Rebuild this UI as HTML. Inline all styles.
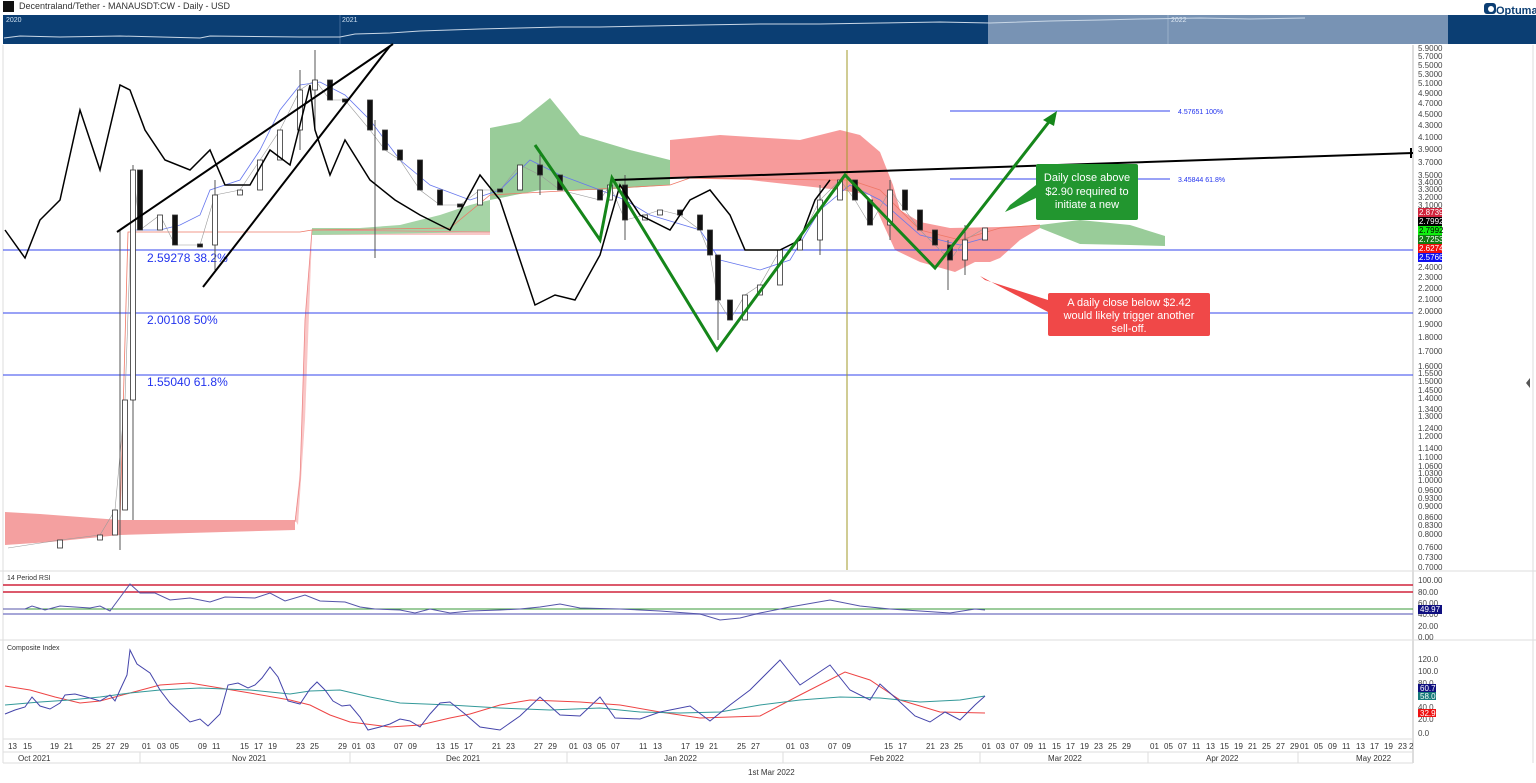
<!DOCTYPE html>
<html><head><meta charset="utf-8"><style>
body{margin:0;width:1536px;height:783px;background:#fff;overflow:hidden;font-family:"Liberation Sans",sans-serif}
svg{display:block}
.ax{font-size:8px;fill:#444}
.dt{font-size:8px;fill:#333}
</style></head><body>
<svg width="1536" height="783" viewBox="0 0 1536 783" xmlns="http://www.w3.org/2000/svg" font-family="Liberation Sans, sans-serif">
<rect width="1536" height="783" fill="#fff"/>
<rect x="3" y="1" width="11" height="11" fill="#111"/>
<text x="19" y="9" font-size="9" fill="#333">Decentraland/Tether - MANAUSDT:CW - Daily - USD</text>
<rect x="3" y="15" width="985" height="29" fill="#0b3e73"/>
<rect x="988" y="15" width="460" height="29" fill="#7893b4"/>
<rect x="1448" y="15" width="88" height="29" fill="#0b3e73"/>
<line x1="340" y1="15" x2="340" y2="44" stroke="#5a7fa8" stroke-width="0.7"/>
<line x1="1168" y1="15" x2="1168" y2="44" stroke="#a9bcd3" stroke-width="0.7"/>
<text x="6" y="22" font-size="7" fill="#cfe0f0">2020</text>
<text x="342" y="22" font-size="7" fill="#cfe0f0">2021</text>
<text x="1171" y="22" font-size="7" fill="#dde7f2">2022</text>
<polyline points="4,38 20,36 60,37 120,36 200,38 210,36 300,37 340,37 355,34 390,33 420,31 450,30 480,29 520,28 560,27 600,27 650,26 700,25 760,24 820,24 880,23 940,22 990,23 1050,21 1100,20 1140,19 1200,18 1250,19 1305,18" fill="none" stroke="#c9d7e6" stroke-width="1"/>
<rect x="1484" y="3" width="12" height="11" rx="3" fill="#0b3e73"/>
<circle cx="1491" cy="9" r="3" fill="#fff"/>
<text x="1496" y="14" font-size="11" font-weight="bold" fill="#0b3e73">Optuma</text>

<line x1="1413" y1="45" x2="1413" y2="763" stroke="#bbb" stroke-width="1"/>
<line x1="0" y1="571" x2="1536" y2="571" stroke="#ddd"/>
<line x1="0" y1="640" x2="1536" y2="640" stroke="#ddd"/>
<line x1="3" y1="739" x2="1413" y2="739" stroke="#ddd"/>
<line x1="3" y1="752" x2="1413" y2="752" stroke="#ddd"/>
<line x1="3" y1="763" x2="1413" y2="763" stroke="#ddd"/>
<line x1="3" y1="45" x2="3" y2="763" stroke="#ddd"/>
<line x1="1533" y1="45" x2="1533" y2="763" stroke="#ddd"/>

<!-- clouds -->
<polygon points="5,512 40,514 120,520 295,520 295,530 120,535 50,542 5,545" fill="#f4a0a0"/>
<polygon points="295,520 300,470 305,320 312,230 490,228 490,235 312,235 305,420 298,525" fill="#f9c7c7"/>
<polygon points="312,228 360,228 400,225 440,215 470,205 490,200 490,232 312,235" fill="#a6d4a6"/>
<polygon points="490,128 520,122 550,98 580,135 630,150 670,160 670,185 600,190 540,190 490,200" fill="#99cc99"/>
<polygon points="670,140 720,135 800,140 840,130 860,135 880,152 893,185 900,210 920,222 950,228 1000,227 1040,225 1040,228 1020,240 1000,258 990,262 975,262 955,272 920,262 895,250 870,195 840,190 750,180 670,178" fill="#f79b9b"/>
<polygon points="1040,225 1080,220 1100,222 1130,225 1165,236 1165,246 1130,245 1080,244 1040,228" fill="#99cc99"/>
<polyline points="295,522 300,480 305,320 312,230 490,232" fill="none" stroke="#e88" stroke-width="0.8"/>
<polyline points="120,522 128,232 300,232 312,230 450,228 490,195 670,185 690,178 830,180 850,180 880,190 920,230 960,240 1000,228 1040,225" fill="none" stroke="#e76" stroke-width="0.8"/>
<polyline points="130,230 160,230 180,225 200,215 210,190 240,180 260,150 280,110 300,85 320,82 345,95 370,120 400,160 430,185 470,200 500,190 530,160 560,175 600,190 625,200 650,215 700,230 720,260 760,270 790,260 820,210 850,185 880,200 920,235 960,245 985,238" fill="none" stroke="#6677ee" stroke-width="0.8"/>

<line x1="3" y1="250" x2="1413" y2="250" stroke="#3344ee" stroke-width="1"/>
<line x1="3" y1="313" x2="1413" y2="313" stroke="#3344ee" stroke-width="1"/>
<line x1="3" y1="375" x2="1413" y2="375" stroke="#3344ee" stroke-width="1"/>
<text x="147" y="262" font-size="12" fill="#2233ee">2.59278   38.2%</text>
<text x="147" y="324" font-size="12" fill="#2233ee">2.00108   50%</text>
<text x="147" y="386" font-size="12" fill="#2233ee">1.55040   61.8%</text>
<line x1="950" y1="111" x2="1170" y2="111" stroke="#3344ee"/>
<line x1="950" y1="179" x2="1170" y2="179" stroke="#3344ee"/>
<text x="1178" y="114" font-size="7" fill="#2233ee">4.57651    100%</text>
<text x="1178" y="182" font-size="7" fill="#2233ee">3.45844    61.8%</text>
<line x1="847" y1="50" x2="847" y2="570" stroke="#a09a2a" stroke-width="1"/>

<!-- price wicks -->
<polyline points="8,548 60,540 100,535 115,510 125,400 133,170 140,230 160,215 175,245 200,245 215,195 240,190 260,160 280,130 300,90 315,80 330,100 345,100 370,130 385,150 400,160 420,190 440,205 460,205 480,190 500,190 520,165 540,175 560,190 600,200 610,185 625,220 645,215 660,210 680,215 700,230 710,255 718,300 730,320 745,295 760,285 780,250 800,240 820,200 840,180 855,200 870,225 890,190 905,210 920,230 935,245 950,260 965,240 985,228" fill="none" stroke="#999" stroke-width="0.6"/>
<g stroke="#555" stroke-width="1">
<line x1="120" y1="230" x2="120" y2="550"/><line x1="133" y1="165" x2="133" y2="520"/><line x1="375" y1="120" x2="375" y2="258"/><line x1="718" y1="255" x2="718" y2="340"/><line x1="315" y1="50" x2="315" y2="130"/><line x1="948" y1="240" x2="948" y2="290"/>
<line x1="215" y1="180" x2="215" y2="270"/><line x1="300" y1="70" x2="300" y2="150"/><line x1="540" y1="150" x2="540" y2="195"/><line x1="625" y1="175" x2="625" y2="240"/><line x1="820" y1="185" x2="820" y2="255"/><line x1="890" y1="180" x2="890" y2="240"/><line x1="965" y1="225" x2="965" y2="275"/>
</g>
<g stroke="#333" stroke-width="0.8">
<g fill="#fff">
<rect x="57.5" y="540" width="5" height="8"/><rect x="97.5" y="535" width="5" height="5"/><rect x="112.5" y="510" width="5" height="25"/><rect x="122.5" y="400" width="5" height="110"/><rect x="130.5" y="170" width="5" height="230"/><rect x="157.5" y="215" width="5" height="15"/><rect x="212.5" y="195" width="5" height="50"/><rect x="237.5" y="190" width="5" height="5"/><rect x="257.5" y="160" width="5" height="30"/><rect x="277.5" y="130" width="5" height="30"/><rect x="297.5" y="90" width="5" height="40"/><rect x="312.5" y="80" width="5" height="10"/><rect x="477.5" y="190" width="5" height="15"/><rect x="517.5" y="165" width="5" height="25"/><rect x="607.5" y="185" width="5" height="15"/><rect x="642.5" y="215" width="5" height="5"/><rect x="657.5" y="210" width="5" height="5"/><rect x="742.5" y="295" width="5" height="25"/><rect x="757.5" y="285" width="5" height="10"/><rect x="777.5" y="250" width="5" height="35"/><rect x="797.5" y="240" width="5" height="10"/><rect x="817.5" y="200" width="5" height="40"/><rect x="837.5" y="180" width="5" height="20"/><rect x="887.5" y="190" width="5" height="35"/><rect x="962.5" y="240" width="5" height="20"/><rect x="982.5" y="228" width="5" height="12"/>
</g>
<g fill="#111">
<rect x="137.5" y="170" width="5" height="60"/><rect x="172.5" y="215" width="5" height="30"/><rect x="197.5" y="244" width="5" height="3"/><rect x="327.5" y="80" width="5" height="20"/><rect x="342.5" y="99" width="5" height="3"/><rect x="367.5" y="100" width="5" height="30"/><rect x="382.5" y="130" width="5" height="20"/><rect x="397.5" y="150" width="5" height="10"/><rect x="417.5" y="160" width="5" height="30"/><rect x="437.5" y="190" width="5" height="15"/><rect x="457.5" y="204" width="5" height="3"/><rect x="497.5" y="189" width="5" height="3"/><rect x="537.5" y="165" width="5" height="10"/><rect x="557.5" y="175" width="5" height="15"/><rect x="597.5" y="190" width="5" height="10"/><rect x="622.5" y="185" width="5" height="35"/><rect x="677.5" y="210" width="5" height="5"/><rect x="697.5" y="215" width="5" height="15"/><rect x="707.5" y="230" width="5" height="25"/><rect x="715.5" y="255" width="5" height="45"/><rect x="727.5" y="300" width="5" height="20"/><rect x="852.5" y="180" width="5" height="20"/><rect x="867.5" y="200" width="5" height="25"/><rect x="902.5" y="190" width="5" height="20"/><rect x="917.5" y="210" width="5" height="20"/><rect x="932.5" y="230" width="5" height="15"/><rect x="947.5" y="245" width="5" height="15"/>
</g>
</g>
<polyline points="5,230 25,258 40,220 60,200 80,110 100,170 120,85 130,90 145,130 165,160 190,170 210,150 225,185 250,185 270,150 290,165 310,85 315,130 330,175 345,140 370,180 395,200 420,215 450,230 480,175 500,200 515,245 535,305 555,295 575,300 600,255 620,185 640,215 670,230 690,200 710,190 730,215 745,250 780,250 800,240 815,200 830,180" fill="none" stroke="#000" stroke-width="1.5"/>
<line x1="117" y1="232" x2="393" y2="44" stroke="#000" stroke-width="2"/>
<line x1="203" y1="287" x2="390" y2="46" stroke="#000" stroke-width="2"/>
<line x1="612" y1="180" x2="1413" y2="153" stroke="#000" stroke-width="2"/>
<line x1="1411" y1="148" x2="1411" y2="158" stroke="#000" stroke-width="2"/>
<polyline points="535,145 600,240 612,178 717,350 845,175 935,268 1052,118" fill="none" stroke="#15861a" stroke-width="3"/>
<polygon points="1057,111 1043,120 1054,126" fill="#15861a"/>

<polygon points="1036,185 1010,205 1005,212 1036,198" fill="#22962f"/>
<rect x="1036" y="164" width="102" height="56" rx="2" fill="#22962f"/>
<text font-size="11" fill="#fff" text-anchor="middle"><tspan x="1087" y="181">Daily close above</tspan><tspan x="1087" y="195">$2.90 required to</tspan><tspan x="1087" y="208">initiate a new</tspan></text>
<polygon points="1048,300 985,280 980,276 1048,312" fill="#f04848"/>
<rect x="1048" y="293" width="162" height="43" rx="2" fill="#f04848"/>
<text font-size="11" fill="#fff" text-anchor="middle"><tspan x="1129" y="306">A daily close below $2.42</tspan><tspan x="1129" y="319">would likely trigger another</tspan><tspan x="1129" y="332">sell-off.</tspan></text>

<g class="ax">
<text x="1418" y="51">5.9000</text><text x="1418" y="59">5.7000</text><text x="1418" y="68">5.5000</text><text x="1418" y="77">5.3000</text><text x="1418" y="86">5.1000</text><text x="1418" y="96">4.9000</text><text x="1418" y="106">4.7000</text><text x="1418" y="117">4.5000</text><text x="1418" y="128">4.3000</text><text x="1418" y="140">4.1000</text><text x="1418" y="152">3.9000</text><text x="1418" y="165">3.7000</text><text x="1418" y="178">3.5000</text><text x="1418" y="185">3.4000</text><text x="1418" y="192">3.3000</text><text x="1418" y="200">3.2000</text><text x="1418" y="208">3.1000</text>
<text x="1418" y="270">2.4000</text><text x="1418" y="280">2.3000</text><text x="1418" y="291">2.2000</text><text x="1418" y="302">2.1000</text><text x="1418" y="314">2.0000</text><text x="1418" y="327">1.9000</text><text x="1418" y="340">1.8000</text><text x="1418" y="354">1.7000</text><text x="1418" y="369">1.6000</text><text x="1418" y="376">1.5500</text><text x="1418" y="384">1.5000</text><text x="1418" y="393">1.4500</text><text x="1418" y="401">1.4000</text><text x="1418" y="412">1.3400</text><text x="1418" y="419">1.3000</text><text x="1418" y="431">1.2400</text><text x="1418" y="439">1.2000</text><text x="1418" y="451">1.1400</text><text x="1418" y="460">1.1000</text><text x="1418" y="469">1.0600</text><text x="1418" y="476">1.0300</text><text x="1418" y="483">1.0000</text><text x="1418" y="493">0.9600</text><text x="1418" y="501">0.9300</text><text x="1418" y="509">0.9000</text><text x="1418" y="520">0.8600</text><text x="1418" y="528">0.8300</text><text x="1418" y="537">0.8000</text><text x="1418" y="550">0.7600</text><text x="1418" y="560">0.7300</text><text x="1418" y="570">0.7000</text>
</g>
<rect x="1418" y="208" width="24" height="9" fill="#d0243c"/><text x="1419" y="215" font-size="8" fill="#fff">2.8739</text>
<rect x="1418" y="217" width="24" height="9" fill="#000"/><text x="1419" y="224" font-size="8" fill="#fff">2.7992</text>
<rect x="1418" y="226" width="24" height="9" fill="#11ee11"/><text x="1419" y="233" font-size="8" fill="#000">2.7992</text>
<rect x="1418" y="235" width="24" height="9" fill="#127a12"/><text x="1419" y="242" font-size="8" fill="#fff">2.7253</text>
<rect x="1418" y="244" width="24" height="9" fill="#f01010"/><text x="1419" y="251" font-size="8" fill="#fff">2.6274</text>
<rect x="1418" y="253" width="24" height="9" fill="#1010f0"/><text x="1419" y="260" font-size="8" fill="#fff">2.5766</text>
<polygon points="1530,378 1526,383 1530,388" fill="#555"/>

<text x="7" y="580" font-size="7" fill="#333">14 Period RSI</text>
<line x1="3" y1="585" x2="1413" y2="585" stroke="#d0243c" stroke-width="1.5"/>
<line x1="3" y1="592" x2="1413" y2="592" stroke="#d0243c" stroke-width="1.5"/>
<line x1="3" y1="609" x2="1413" y2="609" stroke="#3a9a3a"/>
<line x1="3" y1="614" x2="1413" y2="614" stroke="#8888cc" stroke-width="1.5"/>
<polyline points="3,609 25,609 32,606 45,610 60,606 90,608 100,606 110,611 130,584 140,593 155,593 170,600 190,598 210,602 225,597 255,598 270,593 285,601 305,595 320,601 345,602 360,607 375,609 400,610 415,613 430,609 450,613 470,611 500,610 520,609 540,607 560,604 580,608 620,609 660,611 700,614 720,620 740,618 760,613 790,607 830,600 860,606 890,609 920,611 950,613 975,609 985,610" fill="none" stroke="#5555aa" stroke-width="1"/>
<g class="ax"><text x="1418" y="583">100.00</text><text x="1418" y="595">80.00</text><text x="1418" y="606">60.00</text><text x="1418" y="617">40.00</text><text x="1418" y="629">20.00</text><text x="1418" y="640">0.00</text></g>
<rect x="1418" y="605" width="24" height="9" fill="#101080"/><text x="1420" y="612" font-size="8" fill="#fff">49.97</text>

<text x="7" y="650" font-size="7" fill="#333">Composite Index</text>
<polyline points="5,686 30,690 55,697 80,703 100,701 130,693 160,685 190,683 220,688 250,693 290,700 310,705 330,715 350,722 390,727 420,725 450,718 470,714 500,705 530,700 580,702 620,705 660,712 700,718 760,716 800,695 845,672 870,680 900,700 940,712 985,713" fill="none" stroke="#ee4444" stroke-width="1"/>
<polyline points="5,705 40,702 70,700 100,697 130,693 160,690 200,688 250,690 290,694 310,691 340,690 370,697 400,703 450,705 500,708 550,710 600,708 640,712 680,713 720,712 760,705 800,700 840,697 880,698 920,702 960,700 985,696" fill="none" stroke="#339999" stroke-width="1"/>
<polyline points="5,714 15,710 25,707 32,697 40,706 50,709 60,703 65,695 75,694 90,698 100,701 110,695 115,701 120,690 127,675 130,650 137,664 150,673 160,690 170,703 190,722 200,719 208,726 220,714 228,685 238,683 248,688 255,685 262,678 270,667 278,677 288,701 300,704 310,689 317,682 325,690 333,701 342,706 350,705 360,717 368,730 380,727 390,724 400,719 410,721 420,727 430,714 440,703 450,702 465,714 480,727 500,730 520,716 540,697 560,715 580,716 600,697 615,718 640,719 660,712 690,706 710,721 730,705 750,690 770,670 780,660 800,685 830,665 850,690 870,700 880,684 900,702 915,716 930,722 945,712 960,720 975,705 985,696" fill="none" stroke="#4444aa" stroke-width="1"/>
<g class="ax"><text x="1418" y="662">120.0</text><text x="1418" y="674">100.0</text><text x="1418" y="686">80.0</text><text x="1418" y="710">40.0</text><text x="1418" y="722">20.0</text><text x="1418" y="736">0.0</text></g>
<rect x="1418" y="684" width="18" height="8" fill="#101080"/><text x="1420" y="691" font-size="8" fill="#fff">60.7</text>
<rect x="1418" y="692" width="18" height="8" fill="#177a7a"/><text x="1420" y="699" font-size="8" fill="#fff">58.0</text>
<rect x="1418" y="709" width="18" height="8" fill="#ee1111"/><text x="1420" y="716" font-size="8" fill="#fff">32.9</text>

<g class="dt">
<text x="8" y="749">13</text><text x="23" y="749">15</text><text x="50" y="749">19</text><text x="64" y="749">21</text><text x="92" y="749">25</text><text x="106" y="749">27</text><text x="120" y="749">29</text>
<text x="142" y="749">01</text><text x="157" y="749">03</text><text x="170" y="749">05</text><text x="198" y="749">09</text><text x="212" y="749">11</text><text x="240" y="749">15</text><text x="254" y="749">17</text><text x="268" y="749">19</text><text x="296" y="749">23</text><text x="310" y="749">25</text><text x="338" y="749">29</text>
<text x="352" y="749">01</text><text x="366" y="749">03</text><text x="394" y="749">07</text><text x="408" y="749">09</text><text x="436" y="749">13</text><text x="450" y="749">15</text><text x="464" y="749">17</text><text x="492" y="749">21</text><text x="506" y="749">23</text><text x="534" y="749">27</text><text x="548" y="749">29</text>
<text x="569" y="749">01</text><text x="583" y="749">03</text><text x="597" y="749">05</text><text x="611" y="749">07</text><text x="639" y="749">11</text><text x="653" y="749">13</text><text x="681" y="749">17</text><text x="695" y="749">19</text><text x="709" y="749">21</text><text x="737" y="749">25</text><text x="751" y="749">27</text>
<text x="786" y="749">01</text><text x="800" y="749">03</text><text x="828" y="749">07</text><text x="842" y="749">09</text><text x="884" y="749">15</text><text x="898" y="749">17</text><text x="926" y="749">21</text><text x="940" y="749">23</text><text x="954" y="749">25</text>
<text x="982" y="749">01</text><text x="996" y="749">03</text><text x="1010" y="749">07</text><text x="1024" y="749">09</text><text x="1038" y="749">11</text><text x="1052" y="749">15</text><text x="1066" y="749">17</text><text x="1080" y="749">19</text><text x="1094" y="749">23</text><text x="1108" y="749">25</text><text x="1122" y="749">29</text>
<text x="1150" y="749">01</text><text x="1164" y="749">05</text><text x="1178" y="749">07</text><text x="1192" y="749">11</text><text x="1206" y="749">13</text><text x="1220" y="749">15</text><text x="1234" y="749">19</text><text x="1248" y="749">21</text><text x="1262" y="749">25</text><text x="1276" y="749">27</text><text x="1290" y="749">29</text>
<text x="1300" y="749">01</text><text x="1314" y="749">05</text><text x="1328" y="749">09</text><text x="1342" y="749">11</text><text x="1356" y="749">13</text><text x="1370" y="749">17</text><text x="1384" y="749">19</text><text x="1398" y="749">23</text><text x="1409" y="749">2</text>
<text x="18" y="761">Oct 2021</text><text x="232" y="761">Nov 2021</text><text x="446" y="761">Dec 2021</text><text x="664" y="761">Jan 2022</text><text x="870" y="761">Feb 2022</text><text x="1048" y="761">Mar 2022</text><text x="1206" y="761">Apr 2022</text><text x="1356" y="761">May 2022</text>
<text x="748" y="775">1st Mar 2022</text>
</g>
<g stroke="#ddd"><line x1="140" y1="752" x2="140" y2="763"/><line x1="350" y1="752" x2="350" y2="763"/><line x1="567" y1="752" x2="567" y2="763"/><line x1="783" y1="752" x2="783" y2="763"/><line x1="980" y1="752" x2="980" y2="763"/><line x1="1148" y1="752" x2="1148" y2="763"/><line x1="1298" y1="752" x2="1298" y2="763"/></g>
</svg>
</body></html>
